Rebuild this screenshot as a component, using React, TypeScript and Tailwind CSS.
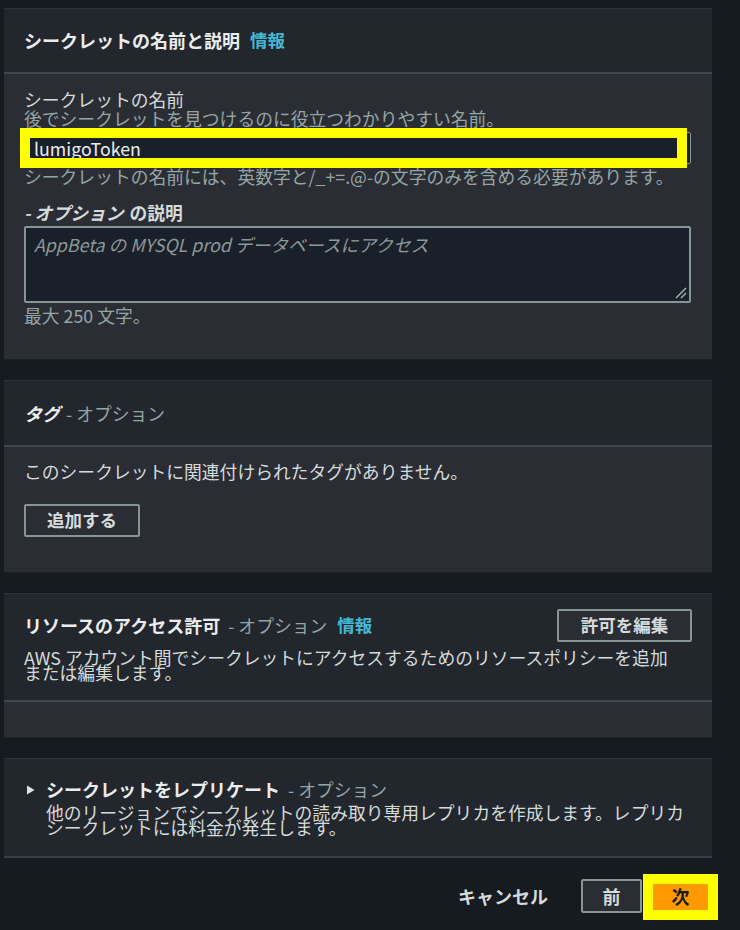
import React from "react";

const FONT = '"Noto Sans CJK JP", "Noto Sans", sans-serif';

function Divider() {
  return <div className="h-[2px] bg-[#414750]" />;
}

export default function App() {
  return (
    <div
      className="w-[740px] min-h-[930px] bg-[#161a21] pt-2 pl-1 text-[#d5dbdb]"
      style={{ fontFamily: FONT }}
    >
      <div className="w-[708px] flex flex-col gap-5">
        {/* Card 1 */}
        <div className="border-t border-[#2c3038] border-b border-b-[#1d2127]">
          <div className="h-[63px] bg-[#22262d] flex items-center px-5">
            <span className="text-[18px] font-bold text-[#eaeded]">シークレットの名前と説明</span>
            <span className="ml-2.5 text-[17.5px] font-bold text-[#44b9d6]">情報</span>
          </div>
          <Divider />
          <div className="bg-[#2a2d34] pl-5 pr-[21px] pt-4 pb-[34px]">
            <div className="text-[17.8px] leading-[19px]">シークレットの名前</div>
            <div className="text-[17.8px] leading-[19px] text-[#95a5a6]">後でシークレットを見つけるのに役立つわかりやすい名前。</div>
            <div className="relative mt-[4px]">
              <div className="h-[32px] bg-[#1a2029] border border-[#879596] rounded-[2px] flex items-center pl-[9px] text-[17.8px] text-[#eaeded]">
                lumigoToken
              </div>
              <div className="absolute left-[-4px] top-[-4px] w-[667px] h-[40px] border-[10px] border-[#ffff00]" />
            </div>
            <div className="mt-0.5 text-[17.8px] leading-[20px] text-[#95a5a6] whitespace-nowrap">
              シークレットの名前には、英数字と/_+=.@-の文字のみを含める必要があります。
            </div>
            <div className="mt-4 text-[17.8px] leading-[20px] font-bold">
              <span className="italic">- オプション</span>
              <span className="ml-1.5">の説明</span>
            </div>
            <div className="relative mt-1 h-[77px] bg-[#1a2029] border-2 border-[#879596] rounded-[2px] pl-2 pt-[3px]">
              <span className="italic text-[17.8px] text-[#8d9899]">AppBeta の MYSQL prod データベースにアクセス</span>
              <svg className="absolute right-[2px] bottom-[2px]" width="12" height="12" viewBox="0 0 12 12">
                <line x1="1" y1="11" x2="11" y2="1" stroke="#aab4b5" strokeWidth="1.5" />
                <line x1="6" y1="11" x2="11" y2="6" stroke="#aab4b5" strokeWidth="1.5" />
              </svg>
            </div>
            <div className="mt-0.5 text-[17.8px] leading-[20px] text-[#95a5a6]">最大 250 文字。</div>
          </div>
        </div>

        {/* Card 2 */}
        <div className="border-t border-[#2c3038] border-b border-b-[#1d2127]">
          <div className="h-[64px] bg-[#22262d] flex items-center px-5">
            <span className="text-[18px] font-bold italic text-[#eaeded]">タグ</span>
            <span className="ml-1.5 text-[17.8px] text-[#95a5a6]">- オプション</span>
          </div>
          <Divider />
          <div className="bg-[#2a2d34] px-5 pt-[14px] pb-[35px]">
            <div className="text-[17.8px] leading-[20px]">このシークレットに関連付けられたタグがありません。</div>
            <button className="mt-[23px] w-[116px] h-[33px] border-2 border-[#879596] rounded-[2px] text-[17.5px] font-bold text-[#d5dbdb] flex items-center justify-center">
              追加する
            </button>
          </div>
        </div>

        {/* Card 3 */}
        <div className="border-t border-[#2c3038] border-b border-b-[#1d2127]">
          <div className="bg-[#22262d] pl-5 pr-5 pt-[15px] pb-[20px]">
            <div className="flex items-start justify-between">
              <div className="h-[33px] flex items-center">
                <span className="text-[18px] font-bold text-[#eaeded]">リソースのアクセス許可</span>
                <span className="ml-2 text-[17.8px] text-[#95a5a6]">- オプション</span>
                <span className="ml-2.5 text-[17.5px] font-bold text-[#44b9d6]">情報</span>
              </div>
              <button className="w-[135px] h-[33px] bg-[#2a2d34] border-2 border-[#879596] rounded-[2px] text-[17.5px] font-bold text-[#d5dbdb] flex items-center justify-center">
                許可を編集
              </button>
            </div>
            <div className="mt-[8px] mr-[8px] text-[17.8px] leading-[15px]">
              AWS アカウント間でシークレットにアクセスするためのリソースポリシーを追加または編集します。
            </div>
          </div>
          <Divider />
          <div className="bg-[#2a2d34] h-[35px]" />
        </div>

        {/* Card 4 */}
        <div className="border-t border-[#2c3038] border-b-2 border-b-[#3a3f47] bg-[#22262d] pl-[22px] pr-3 pt-[20px] pb-[21px] flex">
          <div className="w-[20px] pt-[6px]">
            <svg width="9" height="10" viewBox="0 0 9 10">
              <path d="M1 0.5 L8.5 5 L1 9.5 Z" fill="#e0e4e4" />
            </svg>
          </div>
          <div className="flex-1">
            <div className="leading-[20px]">
              <span className="text-[18px] font-bold text-[#eaeded]">シークレットをレプリケート</span>
              <span className="ml-2 text-[17.8px] text-[#95a5a6]">- オプション</span>
            </div>
            <div className="mt-[5px] text-[17.8px] leading-[15px]">
              他のリージョンでシークレットの読み取り専用レプリカを作成します。レプリカシークレットには料金が発生します。
            </div>
          </div>
        </div>

        {/* Footer */}
        <div className="flex items-center justify-end pr-[1px] mt-px">
          <span className="text-[18px] font-bold text-[#d5dbdb] mr-[33px]">キャンセル</span>
          <button className="w-[61px] h-[34px] bg-[#2a2d34] border-2 border-[#879596] rounded-[2px] text-[18px] font-bold text-[#d5dbdb] flex items-center justify-center">
            前
          </button>
          <div className="relative ml-2">
            <button className="w-[61px] h-[34px] bg-[#ff9900] rounded-[2px] text-[18px] font-bold text-[#16191f] flex items-center justify-center">
              次
            </button>
            <div className="absolute left-[-7px] top-[-5px] w-[75px] h-[46px] border-[10px] border-[#ffff00]" />
          </div>
        </div>
      </div>
    </div>
  );
}
